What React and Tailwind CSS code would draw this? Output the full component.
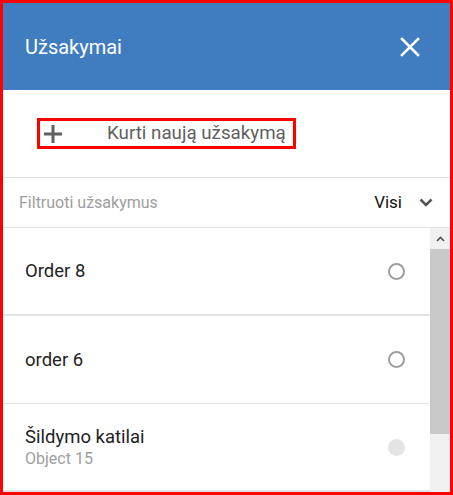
import React from 'react'

const orders = [
  { id: 8, name: 'Order 8', active: true, border: 'border-b-2' },
  { id: 6, name: 'order 6', active: true, border: 'border-b' },
  { id: 15, name: 'Šildymo katilai', sub: 'Object 15', active: false, border: 'border-b-2' },
]

export default function App() {
  return (
    <div
      className="w-[453px] h-[495px] border-[3px] border-[#ff0000] bg-white flex flex-col overflow-hidden"
      style={{ fontFamily: 'Roboto, "Liberation Sans", sans-serif' }}
    >
      <div className="h-[87px] shrink-0 bg-[#3f7dc0] flex items-center justify-between pl-[22px] pr-[30px]">
        <h1 className="text-[20px] text-white">Užsakymai</h1>
        <svg className="w-[20px] h-[20px]" viewBox="0 0 20 20" fill="none" stroke="white" strokeWidth={2.6} strokeLinecap="square">
          <path d="M2 2L18 18M18 2L2 18" />
        </svg>
      </div>

      <div className="h-[88px] shrink-0 flex items-center pl-[34px] border-b border-[#e0e0e0]">
        <button className="h-[31px] w-[259px] border-[3px] border-[#ff0000] flex items-center pl-[3px] text-[#5f5f5f]">
          <svg className="w-[20px] h-[20px]" viewBox="0 0 20 20" fill="none" stroke="#616161" strokeWidth={3}>
            <path d="M10 1V19M1 10H19" />
          </svg>
          <span className="ml-[44px] text-[18.75px]">Kurti naują užsakymą</span>
        </button>
      </div>

      <div className="h-[50px] shrink-0 flex items-center justify-between pl-[16px] pr-[17px] border-b border-[#e0e0e0]">
        <span className="text-[16px] text-[#9e9e9e]">Filtruoti užsakymus</span>
        <div className="flex items-center gap-[17px]">
          <span className="text-[17px] text-[#111]">Visi</span>
          <svg className="w-[14px] h-[9px]" viewBox="0 0 14 9" fill="none" stroke="#555" strokeWidth={2.5}>
            <path d="M1.5 1.5L7 7L12.5 1.5" />
          </svg>
        </div>
      </div>

      <div className="flex-1 flex min-h-0">
        <div className="flex-1 min-w-0">
          {orders.map((o) => (
            <div key={o.id} className={`h-[88px] flex items-center justify-between pl-[22px] pr-[25px] ${o.border} border-[#e3e3e3]`}>
              <div>
                <div className="text-[18.5px] text-[#222] leading-[22px]">{o.name}</div>
                {o.sub && <div className="text-[16px] text-[#9e9e9e] leading-[20px] mt-[1px]">{o.sub}</div>}
              </div>
              {o.active ? (
                <div className="w-[17px] h-[17px] rounded-full border-2 border-[#9e9e9e]" />
              ) : (
                <div className="w-[17px] h-[17px] rounded-full bg-[#e4e4e4]" />
              )}
            </div>
          ))}
        </div>
        <div className="w-[20px] shrink-0 bg-[#f0f0f0] flex flex-col">
          <div className="h-[21px] flex items-center justify-center">
            <svg className="w-[9px] h-[6px]" viewBox="0 0 9 6" fill="none" stroke="#505050" strokeWidth={1.6}>
              <path d="M1 5L4.5 1.5L8 5" />
            </svg>
          </div>
          <div className="h-[185px] bg-[#c8c8c8]" />
        </div>
      </div>
    </div>
  )
}
